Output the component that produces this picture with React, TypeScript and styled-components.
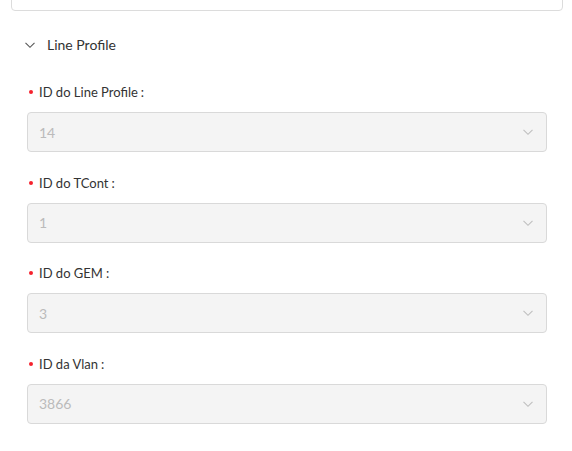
import styled, { createGlobalStyle } from "styled-components";

const GlobalStyle = createGlobalStyle`
  html, body {
    margin: 0;
    padding: 0;
    background: #fff;
  }
  body {
    font-family: Lato, "Open Sans", sans-serif;
    color: #333;
  }
`;

const fields = [
  { label: "ID do Line Profile", value: "14" },
  { label: "ID do TCont", value: "1" },
  { label: "ID do GEM", value: "3" },
  { label: "ID da Vlan", value: "3866" },
];

const Chevron = ({ size = 12, color = "currentColor" }: { size?: number; color?: string }) => (
  <svg width={size} height={size} viewBox="0 0 12 12" fill="none">
    <path d="M1.5 3.8 L6 8.3 L10.5 3.8" stroke={color} strokeWidth="1.1" />
  </svg>
);

const App = () => {
  return (
    <>
      <GlobalStyle />
      <Page>
        <PrevCard />
        <Panel>
          <PanelHeader>
            <HeaderIcon>
              <Chevron size={12} color="#555" />
            </HeaderIcon>
            <HeaderTitle>Line Profile</HeaderTitle>
          </PanelHeader>
          <PanelBody>
            {fields.map((f) => (
              <FormItem key={f.label}>
                <Label>
                  <Required />
                  {f.label}
                  <Colon>:</Colon>
                </Label>
                <SelectBox>
                  <SelectValue>{f.value}</SelectValue>
                  <Arrow>
                    <Chevron size={12} color="#bfbfbf" />
                  </Arrow>
                </SelectBox>
              </FormItem>
            ))}
          </PanelBody>
        </Panel>
      </Page>
    </>
  );
};

const Page = styled.div`
  padding: 0 9px 0 11px;
`;

const PrevCard = styled.div`
  height: 40px;
  margin-top: -29px;
  border: 1px solid #dcdcdc;
  border-radius: 4px;
  box-sizing: border-box;
`;

const Panel = styled.div`
  margin-top: 11px;
`;

const PanelHeader = styled.div`
  display: flex;
  align-items: center;
  height: 46px;
  padding: 0 16px 0 13px;
  font-size: 14px;
  color: #333;
`;

const HeaderIcon = styled.span`
  display: inline-flex;
  width: 12px;
  margin-right: 11px;
`;

const HeaderTitle = styled.span`
  line-height: 22px;
`;

const PanelBody = styled.div`
  padding: 13px 16px 0 16px;
`;

const FormItem = styled.div`
  display: flex;
  flex-direction: column;
  margin-bottom: 19.67px;
`;

const Label = styled.label`
  display: flex;
  align-items: center;
  height: 22px;
  margin-bottom: 9px;
  font-size: 13px;
  color: #333;
`;

const Required = styled.span`
  display: inline-block;
  width: 4px;
  height: 4px;
  border-radius: 50%;
  background: #f5222d;
  margin: 0 6px 0 2px;
`;

const Colon = styled.span`
  margin-left: 3px;
`;

const SelectBox = styled.div`
  display: flex;
  align-items: center;
  justify-content: space-between;
  height: 40px;
  box-sizing: border-box;
  padding: 0 12px 0 11px;
  background: #f4f4f4;
  border: 1px solid #d9d9d9;
  border-radius: 4px;
`;

const SelectValue = styled.span`
  font-size: 14px;
  color: #bbb;
  line-height: 1;
  margin-top: 1px;
`;

const Arrow = styled.span`
  display: inline-flex;
`;

export default App;
